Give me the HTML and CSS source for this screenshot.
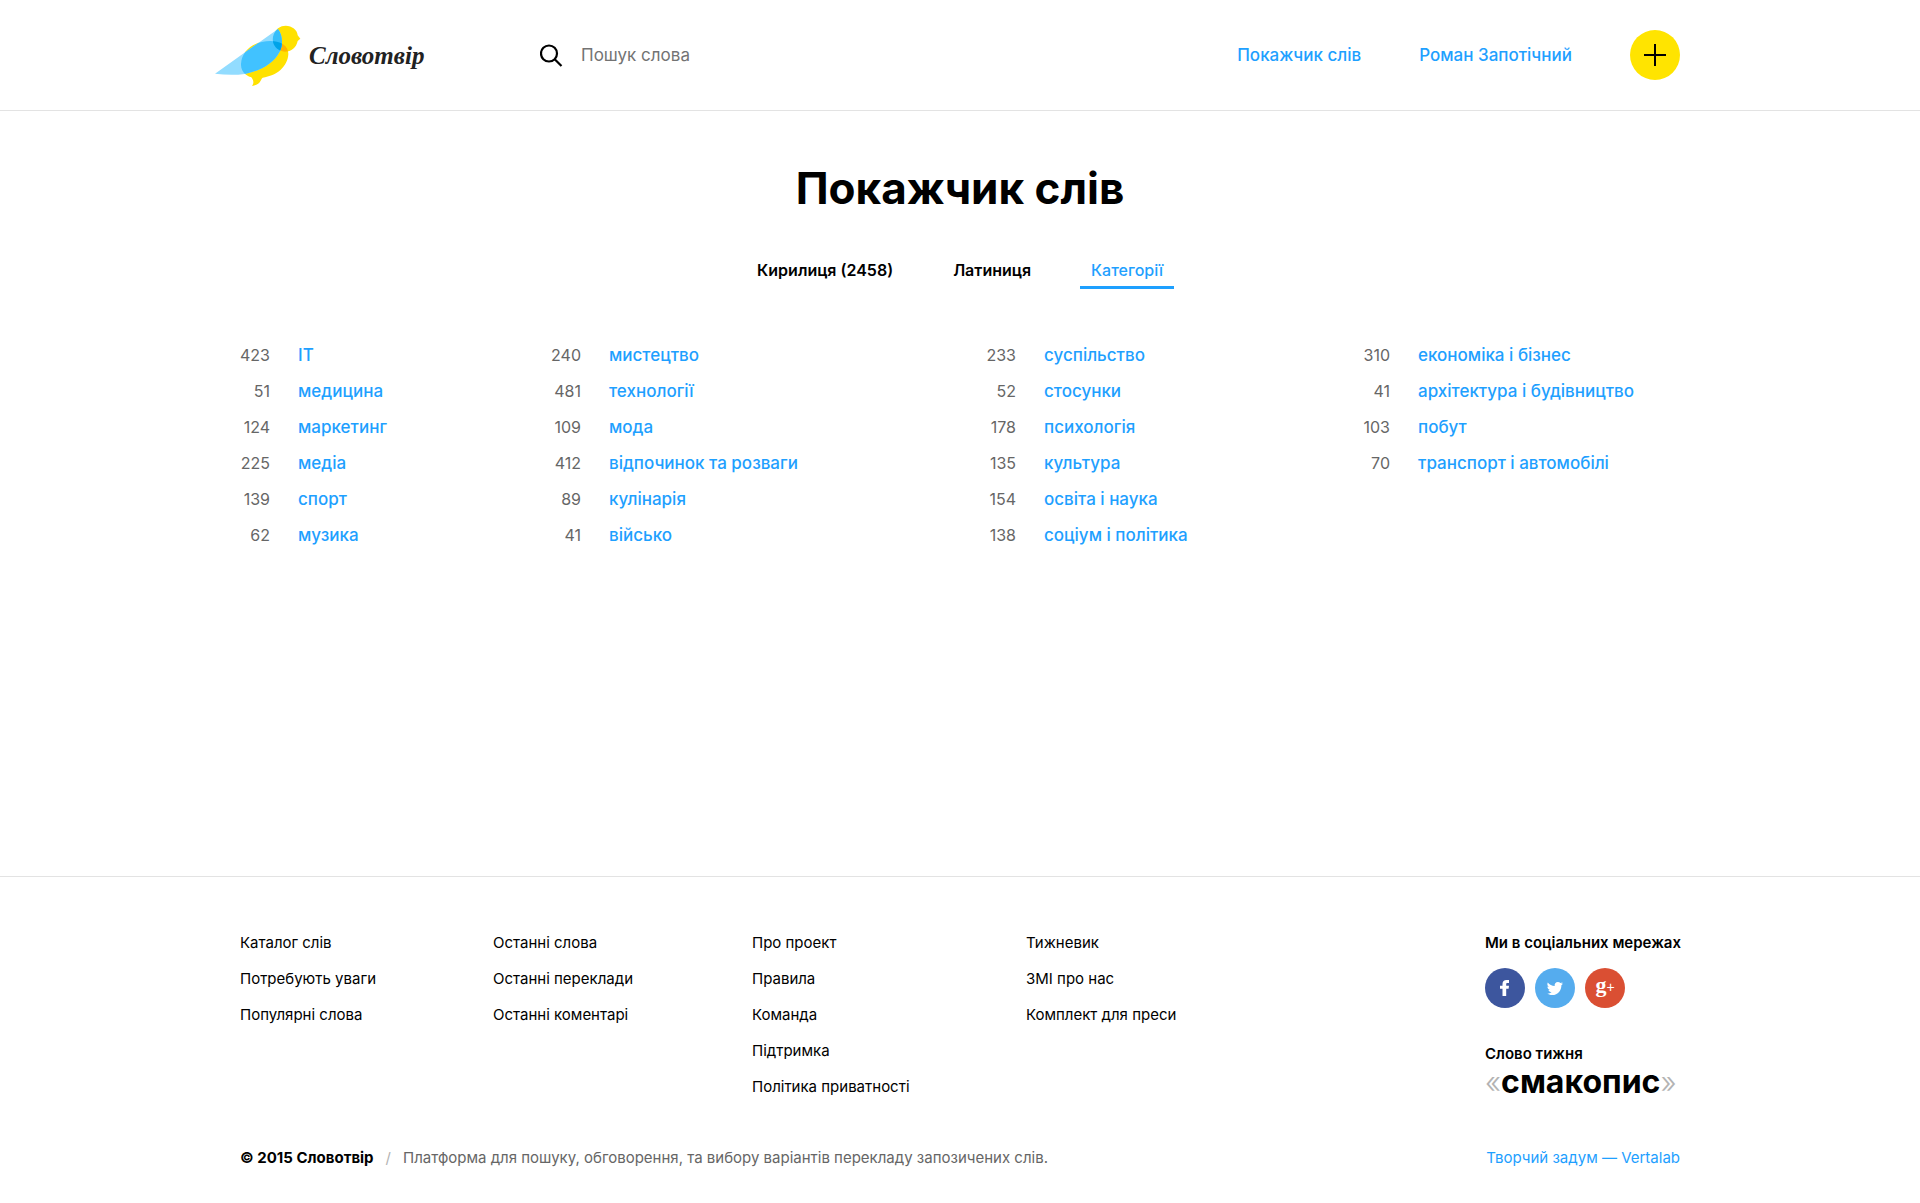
FILE: index.html
```html
<!DOCTYPE html>
<html lang="uk">
<head>
<meta charset="utf-8">
<meta name="viewport" content="width=device-width, initial-scale=1">
<title>Покажчик слів — Словотвір</title>
<link rel="stylesheet" href="styles.css">
</head>
<body>
<header class="site-header">
  <div class="header-inner">
    <a class="logo" href="#">
      <svg class="logo-bird" viewBox="15 15 258 186" aria-hidden="true">
        <defs>
          <path id="wing" d="M15 161 L204 27 C219 44 219 78 209 95 C190 132 150 152 104 162 C75 166 45 165 15 161Z"/>
          <path id="body" d="M93 132 C96 88 135 63 182 63 C214 63 236 78 235 103 C233 140 200 168 158 173 C150 179 155 192 126 198 C133 188 130 180 124 172 C103 166 92 150 93 132Z"/>
          <path id="head" d="M204 25 C229 7 262 24 263 46 L271 56 L263 63 C259 83 244 95 225 95 C187 92 176 50 204 25Z"/>
          <clipPath id="in-wing"><use href="#wing"/></clipPath>
          <clipPath id="in-body"><use href="#body"/></clipPath>
        </defs>
        <use href="#body" fill="#ffe100"/>
        <use href="#head" fill="#ffe100"/>
        <use href="#head" fill="#ffb400" clip-path="url(#in-body)"/>
        <use href="#wing" fill="#92dcff"/>
        <g clip-path="url(#in-wing)">
          <use href="#body" fill="#41c2ff"/>
          <use href="#head" fill="#36befa"/>
          <use href="#head" fill="#00a3e8" clip-path="url(#in-body)"/>
        </g>
      </svg>
      <span class="logo-name">Словотвір</span>
    </a>
    <form class="search" role="search">
      <button class="search-button" type="button" aria-label="Шукати">
        <svg viewBox="0 0 24 24" width="24" height="24" fill="none" stroke="#000" stroke-width="2.2"><circle cx="9" cy="10.500" r="8"/><path d="M14.500 16 L21.500 23"/></svg>
      </button>
      <input class="search-input" type="search" placeholder="Пошук слова" aria-label="Пошук слова">
    </form>
    <nav class="header-nav">
      <a href="#">Покажчик слів</a>
      <a href="#">Роман Запотічний</a>
      <button class="add-button" type="button" aria-label="Додати слово">
        <svg viewBox="0 0 22 22" width="22" height="22" stroke="#000" stroke-width="2"><path d="M11 0V22M0 11H22"/></svg>
      </button>
    </nav>
  </div>
</header>

<main class="content">
  <h1>Покажчик слів</h1>
  <nav class="tabs">
    <a class="tab" href="#">Кирилиця (2458)</a>
    <a class="tab" href="#">Латиниця</a>
    <a class="tab tab-active" href="#" aria-current="page">Категорії</a>
  </nav>
  <div class="categories">
    <ul>
      <li><span class="count">423</span><a href="#">ІТ</a></li>
      <li><span class="count">51</span><a href="#">медицина</a></li>
      <li><span class="count">124</span><a href="#">маркетинг</a></li>
      <li><span class="count">225</span><a href="#">медіа</a></li>
      <li><span class="count">139</span><a href="#">спорт</a></li>
      <li><span class="count">62</span><a href="#">музика</a></li>
    </ul>
    <ul>
      <li><span class="count">240</span><a href="#">мистецтво</a></li>
      <li><span class="count">481</span><a href="#">технології</a></li>
      <li><span class="count">109</span><a href="#">мода</a></li>
      <li><span class="count">412</span><a href="#">відпочинок та розваги</a></li>
      <li><span class="count">89</span><a href="#">кулінарія</a></li>
      <li><span class="count">41</span><a href="#">військо</a></li>
    </ul>
    <ul>
      <li><span class="count">233</span><a href="#">суспільство</a></li>
      <li><span class="count">52</span><a href="#">стосунки</a></li>
      <li><span class="count">178</span><a href="#">психологія</a></li>
      <li><span class="count">135</span><a href="#">культура</a></li>
      <li><span class="count">154</span><a href="#">освіта і наука</a></li>
      <li><span class="count">138</span><a href="#">соціум і політика</a></li>
    </ul>
    <ul>
      <li><span class="count">310</span><a href="#">економіка і бізнес</a></li>
      <li><span class="count">41</span><a href="#">архітектура і будівництво</a></li>
      <li><span class="count">103</span><a href="#">побут</a></li>
      <li><span class="count">70</span><a href="#">транспорт і автомобілі</a></li>
    </ul>
  </div>
</main>

<footer class="site-footer">
  <div class="footer-inner">
    <div class="footer-columns">
      <ul>
        <li><a href="#">Каталог слів</a></li>
        <li><a href="#">Потребують уваги</a></li>
        <li><a href="#">Популярні слова</a></li>
      </ul>
      <ul>
        <li><a href="#">Останні слова</a></li>
        <li><a href="#">Останні переклади</a></li>
        <li><a href="#">Останні коментарі</a></li>
      </ul>
      <ul>
        <li><a href="#">Про проект</a></li>
        <li><a href="#">Правила</a></li>
        <li><a href="#">Команда</a></li>
        <li><a href="#">Підтримка</a></li>
        <li><a href="#">Політика приватності</a></li>
      </ul>
      <ul>
        <li><a href="#">Тижневик</a></li>
        <li><a href="#">ЗМІ про нас</a></li>
        <li><a href="#">Комплект для преси</a></li>
      </ul>
      <div class="footer-side">
        <h2 class="social-title">Ми в соціальних мережах</h2>
        <div class="social">
          <a class="social-link facebook" href="#" aria-label="Facebook">
            <svg viewBox="0 0 40 40" width="40" height="40" fill="#fff"><path d="M17.500 28V20.700H15V17.700H17.500V16C17.500 13.300 19 12 21.500 12H24V15H22.500C21.500 15 21.200 15.400 21.200 16.300V17.700H24L23.600 20.700H21.200V28Z"/></svg>
          </a>
          <a class="social-link twitter" href="#" aria-label="Twitter">
            <svg viewBox="0 0 40 40" width="40" height="40" fill="#fff"><path d="M28 15.500C27.400 15.800 26.800 16 26.100 16.100C26.800 15.600 27.300 15 27.600 14.200C26.900 14.600 26.200 14.900 25.400 15C24.700 14.300 23.900 13.900 22.900 13.900C20.700 13.900 19.200 15.900 19.700 18C16.900 17.900 14.500 16.600 12.800 14.500C11.900 16.100 12.400 18 13.900 19C13.300 19 12.800 18.800 12.400 18.600C12.400 20.200 13.500 21.600 15 22C14.500 22.100 14 22.100 13.500 22C13.900 23.300 15.100 24.200 16.600 24.200C15.200 25.300 13.500 25.800 12 25.600C13.400 26.500 15.200 27.100 17 27.100C23.200 27.100 26.500 22 26.400 17.200C27 16.800 27.600 16.200 28 15.500Z"/></svg>
          </a>
          <a class="social-link google" href="#" aria-label="Google Plus"><span class="google-g">g</span><span class="google-plus">+</span></a>
        </div>
        <h2 class="week-title">Слово тижня</h2>
        <a class="week-word" href="#"><span class="quote">«</span>смакопис<span class="quote">»</span></a>
      </div>
    </div>
    <div class="footer-bottom">
      <strong>© 2015 Словотвір</strong>
      <span class="slash">/</span>
      <p>Платформа для пошуку, обговорення, та вибору варіантів перекладу запозичених слів.</p>
      <a class="credit" href="#">Творчий задум — Vertalab</a>
    </div>
  </div>
</footer>
</body>
</html>
```
FILE: styles.css
```css
* { box-sizing: border-box; }

body {
  margin: 0;
  min-height: 100vh;
  display: flex;
  flex-direction: column;
  background: #fff;
  color: #000;
  font-family: Inter, "Liberation Sans", sans-serif;
  font-size: 15px;
  line-height: 24px;
}

a { color: inherit; text-decoration: none; }
ul { margin: 0; padding: 0; list-style: none; }
h1, h2, p { margin: 0; }
button { padding: 0; border: 0; background: none; cursor: pointer; }
svg { display: block; }

/* Header */
.site-header { border-bottom: 1px solid #e3e3e3; }

.header-inner {
  width: 100%;
  max-width: 1490px;
  height: 110px;
  margin: 0 auto;
  padding-right: 25px;
  display: flex;
  align-items: center;
}

.logo { display: flex; align-items: center; gap: 8px; width: 325px; padding-top: 2px; color: #222; }
.logo-bird { width: 86px; height: 62px; }
.logo-name {
  font: italic bold 25px/32px "Liberation Serif", serif;
}

.search { flex: 1; display: flex; align-items: center; gap: 17px; }
.search-input {
  width: 320px;
  padding: 0;
  border: 0;
  outline: 0;
  background: none;
  font: 17px/24px Inter, "Liberation Sans", sans-serif;
}
.search-input::placeholder { color: #737373; opacity: 1; }

.header-nav {
  display: flex;
  align-items: center;
  gap: 58px;
  color: #1ea0ff;
  font-size: 17px;
  font-weight: 500;
}
.add-button {
  width: 50px;
  height: 50px;
  display: grid;
  place-items: center;
  border-radius: 50%;
  background: #ffe400;
}

/* Word index */
.content {
  flex: 1;
  width: 100%;
  max-width: 1490px;
  margin: 0 auto;
  padding: 49px 25px;
}
h1 { font-size: 44px; line-height: 56px; text-align: center; }

.tabs { display: flex; justify-content: center; gap: 38px; margin-top: 42px; }
.tab {
  padding: 0 11px 4px;
  border-bottom: 3px solid transparent;
  font-size: 16px;
  font-weight: 600;
}
.tab-active { border-color: #1ea0ff; color: #1ea0ff; font-weight: 500; }

.categories {
  display: grid;
  grid-template-columns: 311fr 435fr 374fr 320fr;
  margin-top: 48px;
}
.categories li {
  display: flex;
  align-items: baseline;
  gap: 28px;
  font-size: 17px;
  line-height: 36px;
}
.categories a { color: #1ea0ff; font-weight: 500; white-space: nowrap; }
.count { width: 30px; color: #666; font-size: 16px; text-align: right; }

/* Footer */
.site-footer { border-top: 1px solid #e3e3e3; }
.footer-inner {
  width: 100%;
  max-width: 1490px;
  margin: 0 auto;
  padding: 48px 25px 33px;
}
.footer-columns {
  display: grid;
  grid-template-columns: 253fr 259fr 274fr 459fr 195px;
}
.footer-columns li { line-height: 36px; }

.footer-side h2 { font-size: 15px; font-weight: 600; white-space: nowrap; }
.footer-side .social-title { line-height: 36px; }
.footer-side .week-title { margin-top: 34px; }
.social { display: flex; gap: 10px; margin-top: 7px; }
.social-link {
  width: 40px;
  height: 40px;
  display: flex;
  justify-content: center;
  border-radius: 50%;
  color: #fff;
}
.facebook { background: #3d569e; }
.twitter { background: #55acee; }
.google { background: #da4f33; }
.google-g { font: bold 22px/34px "Liberation Serif", serif; }
.google-plus { font: 14px/38px "Liberation Sans", sans-serif; }

.week-word {
  display: flex;
  font-size: 32px;
  font-weight: 700;
  line-height: 32px;
}
.quote { color: #b3b3b3; font-size: 30px; font-weight: 300; }

.footer-bottom { display: flex; margin-top: 41px; }
.slash { margin: 0 12px; color: #b3b3b3; }
.footer-bottom p { color: #666; }
.credit { margin-left: auto; color: #1ea0ff; }
```
